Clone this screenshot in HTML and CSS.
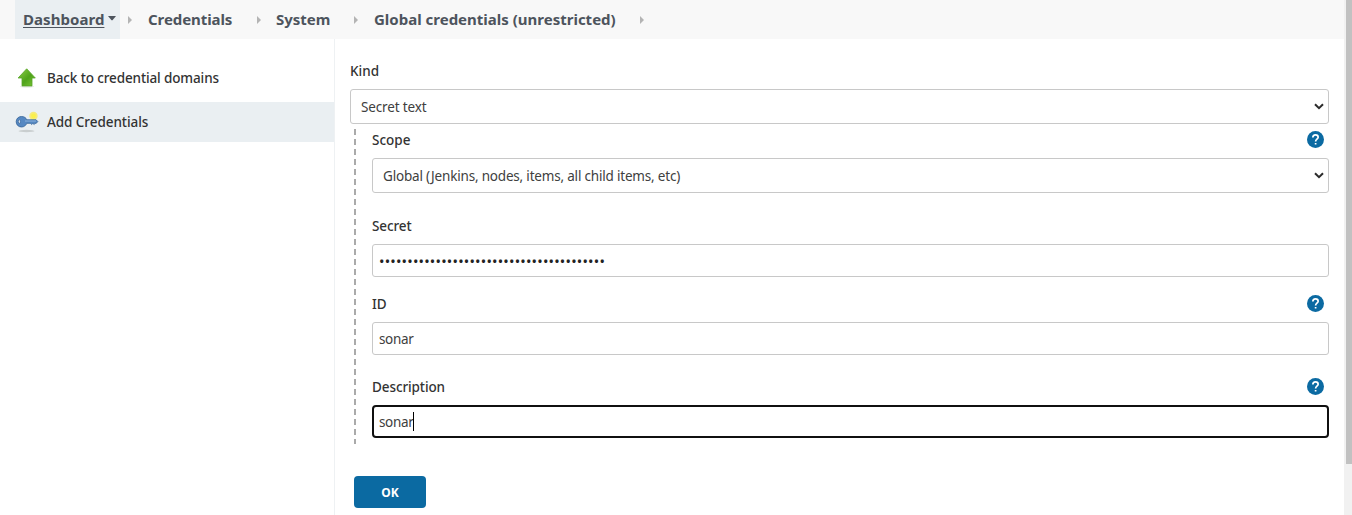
FILE: index.html
```html
<!DOCTYPE html>
<html lang="en">
<head>
<meta charset="utf-8">
<title>Global credentials</title>
<link rel="stylesheet" href="styles.css">
</head>
<body>
<div class="page">
  <div class="window">
    <nav class="crumbs">
      <a class="crumb home"><span class="home-text">Dashboard</span><svg class="caret" viewBox="0 0 8 5"><path d="M0 0h8L4.5 4.3h-1z"/></svg></a>
      <svg class="sep s1" viewBox="0 0 4 8"><path d="M0 0l4 4-4 4z"/></svg>
      <a class="crumb c2">Credentials</a>
      <svg class="sep s2" viewBox="0 0 4 8"><path d="M0 0l4 4-4 4z"/></svg>
      <a class="crumb c3">System</a>
      <svg class="sep s3" viewBox="0 0 4 8"><path d="M0 0l4 4-4 4z"/></svg>
      <a class="crumb c4">Global credentials (unrestricted)</a>
      <svg class="sep s4" viewBox="0 0 4 8"><path d="M0 0l4 4-4 4z"/></svg>
    </nav>
    <div class="body">
      <aside class="side">
        <a class="task">
          <svg class="task-icon" viewBox="0 0 24 24">
            <defs><linearGradient id="g" x1="0" x2="1" y1="0" y2="1"><stop offset="0" stop-color="#8fd04a"/><stop offset=".55" stop-color="#4fa31a"/><stop offset="1" stop-color="#7cc637"/></linearGradient></defs>
            <ellipse cx="12" cy="20.6" rx="7" ry="1" fill="#dfe5dc"/>
            <path d="M11.700 2.800L20.300 12h-3.300v7.900H7V12H3.100z" fill="url(#g)" stroke="#57a427" stroke-width=".8" stroke-linejoin="round"/>
          </svg>
          <span class="t1">Back to credential domains</span>
        </a>
        <a class="task active">
          <svg class="task-icon" viewBox="0 0 24 24">
            <ellipse cx="11.500" cy="21" rx="8" ry="1.200" fill="#c9cecf"/>
            <circle cx="18.500" cy="6" r="4.200" fill="#f6eb7a"/>
            <circle cx="18.500" cy="6" r="2.400" fill="#faf04b"/>
            <path d="M6.500 6.500c3 0 4.600 1.500 5.300 3.300h9.300l1.700 1.700-1.500 1.800h-1.300l-.8 1.200-1.300-1.200-1.300 1.200-1.200-1.200h-3.600c-.8 1.900-2.500 3.700-5.300 3.700-3.300 0-5.300-2.500-5.300-5.300s2-5.200 5.300-5.200z" fill="#5688c2" stroke="#356398" stroke-width=".8"/>
            <path d="M10 11h11" stroke="#8bb1dc" stroke-width="1"/>
            <ellipse cx="4.300" cy="11.600" rx="1" ry="2" fill="#e9eef1" stroke="#356398" stroke-width=".7"/>
          </svg>
          <span class="t2">Add Credentials</span>
        </a>
      </aside>
      <main class="main">
        <div class="label kind"><span class="l-kind">Kind</span></div>
        <div class="field select"><span class="v-secret">Secret text</span><svg class="chev" viewBox="0 0 10 7"><path d="M1 1.200l4 4 4-4"/></svg></div>
        <div class="group">
          <svg class="rail" viewBox="0 0 2 315"><path d="M1 0v315"/></svg>
          <div class="fields">
            <div class="label scope"><span class="l-scope">Scope</span><svg class="help" viewBox="0 0 16 16"><circle cx="8" cy="8" r="8"/><path d="M5.500 6.200c0-1.500 1-2.600 2.500-2.600s2.500 1 2.500 2.300c0 1.800-2.400 1.900-2.400 3.900M8.100 11.200v1.600"/></svg></div>
            <div class="field select"><span class="v-global">Global (Jenkins, nodes, items, all child items, etc)</span><svg class="chev" viewBox="0 0 10 7"><path d="M1 1.200l4 4 4-4"/></svg></div>
            <div class="label secret"><span class="l-secret">Secret</span></div>
            <div class="field input"><span class="dots">••••••••••••••••••••••••••••••••••••••••</span></div>
            <div class="label id"><span class="l-id">ID</span><svg class="help" viewBox="0 0 16 16"><circle cx="8" cy="8" r="8"/><path d="M5.500 6.200c0-1.500 1-2.600 2.500-2.600s2.500 1 2.500 2.300c0 1.800-2.400 1.900-2.400 3.900M8.100 11.200v1.600"/></svg></div>
            <div class="field input"><span class="v-sonar">sonar</span></div>
            <div class="label desc"><span class="l-desc">Description</span><svg class="help" viewBox="0 0 16 16"><circle cx="8" cy="8" r="8"/><path d="M5.500 6.200c0-1.500 1-2.600 2.500-2.600s2.500 1 2.500 2.300c0 1.800-2.400 1.900-2.400 3.900M8.100 11.200v1.600"/></svg></div>
            <div class="field input focus"><span class="v-sonar">sonar</span><i class="cursor"></i></div>
          </div>
        </div>
        <button class="ok">OK</button>
      </main>
    </div>
  </div>
  <div class="scrollbar"><div class="thumb"></div></div>
</div>
</body>
</html>
```
FILE: styles.css
```css
* { box-sizing: border-box; }
body {
  margin: 0;
  height: 515px;
  overflow: hidden;
  background: #fff;
  color: #333;
  font: 13.5px/20px "Noto Sans", "Open Sans", sans-serif;
}
svg { display: block; flex: none; }
span, a { white-space: nowrap; }
.page { display: flex; height: 515px; }
.window { flex: 1; display: flex; flex-direction: column; min-width: 0; }

.crumbs {
  display: flex;
  align-items: center;
  height: 39px;
  padding-left: 15px;
  background: #f8f8f8;
  color: #4d545d;
  font-size: 15px;
  font-weight: 700;
}
.crumb { padding-bottom: 2px; }
.home {
  display: flex;
  align-items: center;
  width: 105px;
  height: 39px;
  padding-left: 8px;
  background: #eaeff2;
}
.home-text { width: 85px; letter-spacing: .05px; text-decoration: underline; text-underline-offset: 2px; }
.caret { width: 8px; height: 5px; fill: #4d545d; }
.sep { width: 4px; height: 8px; fill: #b4b4b4; }
.s1 { margin-left: 8px; }
.c2 { width: 109px; margin-left: 16px; letter-spacing: -.08px; }
.c3 { width: 78px; margin-left: 15px; }
.c4 { width: 266px; margin-left: 16px; }

.body { display: flex; flex: 1; }
.side { width: 335px; padding-top: 19px; border-right: 1px solid #eef1f3; }
.task {
  display: flex;
  align-items: center;
  height: 40px;
  margin-bottom: 4px;
  padding-left: 15px;
  gap: 8px;
  font-weight: 500;
}
.t1 { letter-spacing: -.12px; }
.t2 { letter-spacing: -.06px; }
.active { background: #eaeff2; }
.task-icon { width: 24px; height: 24px; }

.main { flex: 1; padding: 22px 15px 0 15px; }
.label {
  display: flex;
  justify-content: space-between;
  align-items: center;
  height: 20px;
  font-weight: 500;
}
.l-desc { letter-spacing: -.1px; }
.l-secret { letter-spacing: -.1px; }
.kind { margin-bottom: 8px; }
.field {
  display: flex;
  align-items: center;
  border: 1px solid #c8c8c8;
  border-radius: 3px;
  color: #404040;
}
.select { height: 35px; padding: 0 4px 0 10px; justify-content: space-between; }
.input { height: 33px; padding-left: 6px; }
.v-secret { letter-spacing: -.15px; }
.v-global { letter-spacing: -.19px; }
.v-sonar { letter-spacing: -.35px; }
.chev { width: 10px; height: 7px; fill: none; stroke: #2b2b2b; stroke-width: 2; }
.help { width: 17px; height: 17px; margin: 0 5px 2px 0; fill: #0b6aa2; }
.help path { fill: none; stroke: #fff; stroke-width: 1.6; }
.group { display: flex; margin: 5px 0 0 4px; }
.rail { width: 2px; height: 315px; stroke: #aaa; stroke-width: 2; stroke-dasharray: 6 4; }
.fields { flex: 1; margin-left: 16px; }
.scope { margin: 1px 0 8px; }
.secret { margin: 23px 0 8px; }
.id { margin: 17px 0 8px; }
.desc { margin: 22px 0 8px; }
.focus { border: 2px solid #101010; padding-left: 5px; border-radius: 4px; }
.cursor { width: 1px; height: 19px; background: #000; }
.dots { padding-top: 1px; color: #222; font-size: 14.5px; letter-spacing: .2px; }
.ok {
  display: block;
  width: 72px;
  height: 32px;
  margin: 32px 0 0 4px;
  padding: 0;
  border: 0;
  border-radius: 4px;
  background: #0b6aa2;
  color: #fff;
  font: 700 12px "Noto Sans", "Open Sans", sans-serif;
}

.scrollbar { width: 8px; padding-left: 2px; background: #f1f1f1; }
.thumb { height: 464px; background: #c1c1c1; }
```
